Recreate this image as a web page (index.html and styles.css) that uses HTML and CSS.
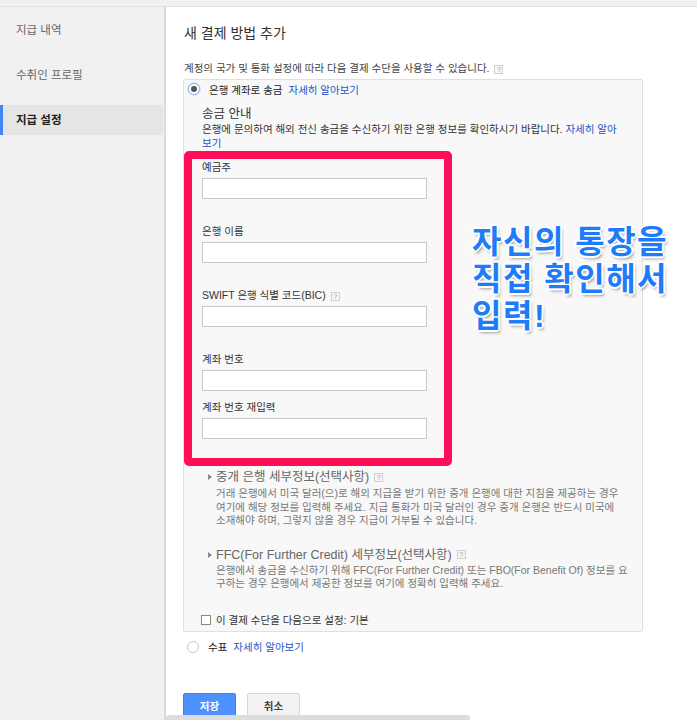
FILE: index.html
```html
<!DOCTYPE html>
<html lang="ko">
<head>
<meta charset="utf-8">
<title>새 결제 방법 추가</title>
<link rel="stylesheet" href="styles.css">
</head>
<body>
<div class="topbar"></div>
<div class="layout">
  <nav class="sidebar">
    <div class="nav-item">지급 내역</div>
    <div class="nav-item">수취인 프로필</div>
    <div class="nav-item active">지급 설정</div>
  </nav>
  <main class="main">
    <h1 class="title">새 결제 방법 추가</h1>
    <p class="intro">계정의 국가 및 통화 설정에 따라 다음 결제 수단을 사용할 수 있습니다. <span class="help">?</span></p>
    <div class="method-box">
      <div class="radio-row">
        <span class="radio checked"></span>
        <span class="radio-label">은행 계좌로 송금</span>
        <a class="link">자세히 알아보기</a>
      </div>
      <div class="guide">
        <div class="guide-title">송금 안내</div>
        <p class="guide-text">은행에 문의하여 해외 전신 송금을 수신하기 위한 은행 정보를 확인하시기 바랍니다. <a class="link">자세히 알아보기</a></p>
      </div>
      <div class="fields-frame">
        <div class="field first">
          <div class="field-label">예금주</div>
          <div class="input"></div>
        </div>
        <div class="field">
          <div class="field-label">은행 이름</div>
          <div class="input"></div>
        </div>
        <div class="field">
          <div class="field-label">SWIFT 은행 식별 코드(BIC) <span class="help">?</span></div>
          <div class="input"></div>
        </div>
        <div class="field">
          <div class="field-label">계좌 번호</div>
          <div class="input"></div>
        </div>
        <div class="field last">
          <div class="field-label">계좌 번호 재입력</div>
          <div class="input"></div>
        </div>
      </div>
      <div class="section first">
        <div class="section-head"><span class="tri"></span>중개 은행 세부정보(선택사항) <span class="help">?</span></div>
        <p class="section-desc keep">거래 은행에서 미국 달러(으)로 해외 지급을 받기 위한 중개 은행에 대한 지침을 제공하는 경우 여기에 해당 정보를 입력해 주세요. 지급 통화가 미국 달러인 경우 중개 은행은 반드시 미국에 소재해야 하며, 그렇지 않을 경우 지급이 거부될 수 있습니다.</p>
      </div>
      <div class="section second">
        <div class="section-head"><span class="tri"></span>FFC(For Further Credit) 세부정보(선택사항) <span class="help">?</span></div>
        <p class="section-desc">은행에서 송금을 수신하기 위해 FFC(For Further Credit) 또는 FBO(For Benefit Of) 정보를 요구하는 경우 은행에서 제공한 정보를 여기에 정확히 입력해 주세요.</p>
      </div>
      <div class="check-row">
        <span class="checkbox"></span>
        <span class="check-label">이 결제 수단을 다음으로 설정: 기본</span>
      </div>
    </div>
    <div class="radio-row other">
      <span class="radio"></span>
      <span class="radio-label">수표</span>
      <a class="link">자세히 알아보기</a>
    </div>
    <div class="actions">
      <button class="btn primary">저장</button>
      <button class="btn">취소</button>
    </div>
    <div class="annotation">자신의 통장을<br>직접 확인해서<br>입력!</div>
  </main>
</div>
<div class="hscroll"></div>
</body>
</html>
```
FILE: styles.css
```css
* { box-sizing: border-box; }

html, body {
  margin: 0;
  padding: 0;
}

body {
  width: 697px;
  height: 720px;
  overflow: hidden;
  position: relative;
  background: #ffffff;
  font-family: "Liberation Sans", "Noto Sans CJK KR", sans-serif;
  color: #333;
}

.topbar {
  height: 7px;
  background: #f1f1f1;
  border-bottom: 1px solid #e2e2e2;
}

.layout {
  display: flex;
  height: 713px;
}

.sidebar {
  width: 166px;
  flex: none;
  background: #f1f1f1;
  border-right: 2px solid #dadada;
  padding-top: 8px;
  display: flex;
  flex-direction: column;
  gap: 15px;
}

.nav-item {
  height: 30px;
  line-height: 30px;
  padding-left: 16px;
  font-size: 11.5px;
  color: #666;
}

.nav-item.active {
  background: #e5e5e5;
  color: #222;
  font-weight: bold;
  border-left: 3px solid #4285f4;
  padding-left: 13px;
  margin-right: 1px;
}

.main {
  position: relative;
  flex: 1;
  padding: 16px 0 0 17px;
}

.title {
  margin: 0;
  font-size: 14px;
  line-height: 20px;
  font-weight: normal;
  color: #333;
  padding-left: 1px;
}

.intro {
  margin: 17px 0 0;
  font-size: 10.5px;
  line-height: 16px;
  color: #444;
  padding-left: 1px;
}

.help {
  display: inline-block;
  width: 9px;
  height: 9px;
  border: 1px solid #cfcfcf;
  background: #f6f6f6;
  color: #999;
  font-size: 7px;
  line-height: 7px;
  text-align: center;
  vertical-align: middle;
  margin-left: 2px;
  font-family: "Liberation Sans", sans-serif;
}

.method-box {
  margin-top: 3px;
  width: 460px;
  background: #f8f8f8;
  border: 1px solid #e0e0e0;
  border-radius: 2px;
  padding-bottom: 3px;
}

.radio-row {
  height: 18px;
  display: flex;
  align-items: center;
  padding-left: 4px;
  font-size: 10.5px;
  color: #222;
}

.radio {
  width: 12px;
  height: 12px;
  border-radius: 50%;
  border: 1px solid #c6c6c6;
  background: #fff;
  flex: none;
  display: flex;
  align-items: center;
  justify-content: center;
}

.radio.checked {
  border: 1px solid #8fb3f0;
  box-shadow: 0 0 0 1px #d3e2fb;
}

.radio.checked::after {
  content: "";
  width: 6px;
  height: 6px;
  border-radius: 50%;
  background: #555;
}

.radio-label {
  margin-left: 9px;
}

.link {
  color: #1a55cc;
  margin-left: 6px;
  text-decoration: none;
}

.guide-text .link {
  margin-left: 0;
}

.guide {
  margin-top: 8px;
  padding-left: 18px;
}

.guide-title {
  font-size: 12.5px;
  line-height: 16px;
  color: #333;
}

.guide-text {
  margin: 0;
  width: 424px;
  font-size: 10.5px;
  line-height: 14px;
  color: #333;
}

.fields-frame {
  margin-top: 1px;
  width: 268px;
  border: 8px solid #ff0f5a;
  border-radius: 5px;
  padding: 0 0 19px 10px;
}

.field {
  margin-top: 24px;
}

.field.first {
  margin-top: 0;
}

.field.last {
  margin-top: 8px;
}

.field-label {
  font-size: 10.5px;
  line-height: 16px;
  margin-bottom: 3px;
  color: #333;
}

.input {
  width: 225px;
  height: 21px;
  background: #fff;
  border: 1px solid #c8c8c8;
}

.section {
  padding-left: 24px;
}

.section.first {
  margin-top: 3px;
}

.section.second {
  margin-top: 19px;
}

.section-head {
  font-size: 12.5px;
  line-height: 16px;
  color: #666;
  display: flex;
  align-items: center;
}

.section-head .help {
  margin-left: 5px;
}

.tri {
  width: 0;
  height: 0;
  border-left: 4px solid #888;
  border-top: 3px solid transparent;
  border-bottom: 3px solid transparent;
  margin-right: 4px;
}

.section-desc {
  margin: 2px 0 0;
  padding-left: 8px;
  width: 421px;
  font-size: 10.5px;
  line-height: 13.5px;
  color: #777;
}

.section-desc.keep {
  word-break: keep-all;
}

.section.second .section-desc {
  margin-top: 1px;
}

.check-row {
  margin-top: 21px;
  height: 16px;
  display: flex;
  align-items: center;
  padding-left: 17px;
  font-size: 10.5px;
  color: #333;
}

.checkbox {
  width: 10px;
  height: 10px;
  border: 1px solid #888;
  background: #fff;
  margin-right: 5px;
  flex: none;
}

.radio-row.other {
  margin-top: 7px;
  height: 16px;
}

.actions {
  margin-top: 38px;
  display: flex;
  gap: 11px;
}

.btn {
  width: 53px;
  height: 25px;
  border-radius: 2px;
  border: 1px solid #d6d6d6;
  background: #f3f3f3;
  color: #444;
  font-family: "Liberation Sans", "Noto Sans CJK KR", sans-serif;
  font-size: 10.5px;
  font-weight: bold;
  padding: 0;
}

.btn.primary {
  background: #4d90fe;
  border-color: #3b7ff0;
  color: #fff;
}

.annotation {
  position: absolute;
  left: 306px;
  top: 217px;
  font-size: 32px;
  line-height: 37px;
  font-weight: bold;
  color: #1f7cf8;
  letter-spacing: 1.5px;
  text-shadow:
    -1px -1px 0 #fff, 1px -1px 0 #fff, -1px 1px 0 #fff, 1px 1px 0 #fff,
    0 -2px 0 #fff, 0 2px 0 #fff, -2px 0 0 #fff, 2px 0 0 #fff,
    2px 3px 3px rgba(0, 0, 0, 0.35);
}

.hscroll {
  position: absolute;
  left: 166px;
  bottom: 0;
  width: 304px;
  height: 5px;
  background: #dcdcdc;
  border-radius: 3px 3px 0 0;
}
```
